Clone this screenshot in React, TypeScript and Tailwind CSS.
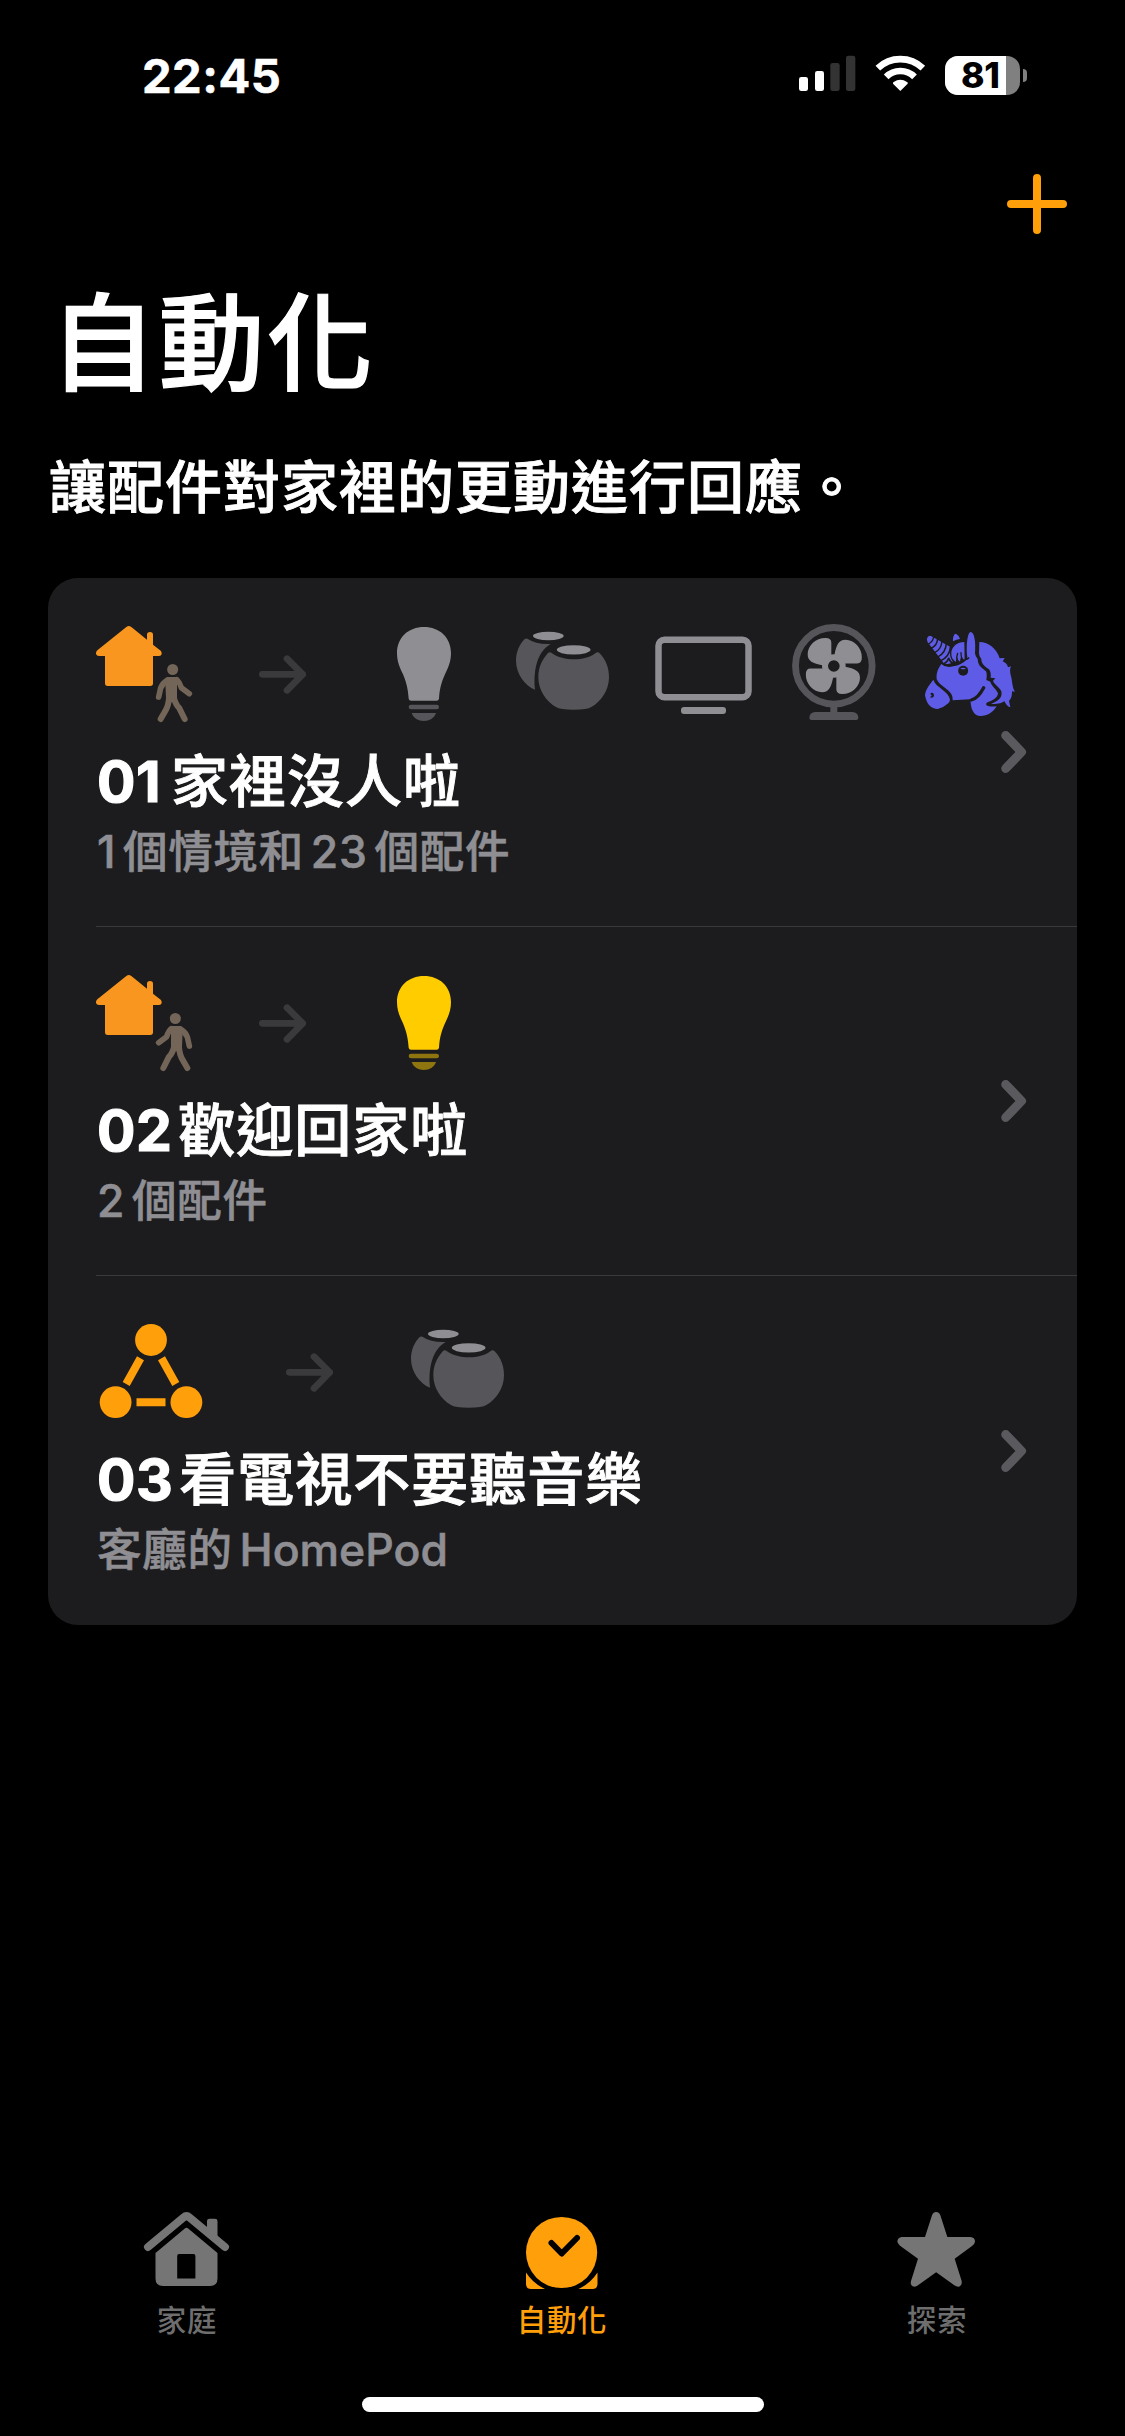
import React from "react";

const CARD = "#1c1c1e";

function StatusBar() {
  return (
    <div className="flex h-[151px] items-center justify-between pl-[142px] pr-[98px]">
      <div className="pt-[1px] text-[47px] font-bold leading-[60px] tracking-[0.5px] [-webkit-text-stroke:0.6px]">22:45</div>
      <div className="flex items-center">
        <svg className="h-[65px] w-[140px]" viewBox="15 0 420 195">
          <rect x="27" y="102" width="27" height="42" rx="7" fill="#fff" />
          <rect x="75" y="84" width="27" height="60" rx="7" fill="#fff" />
          <rect x="121" y="60" width="28" height="84" rx="7" fill="#333" />
          <rect x="168" y="38" width="28" height="106" rx="7" fill="#333" />
          <g fill="none" stroke="#fff" strokeWidth="20">
            <path d="M263.5 75.5A97.500 97.500 0 0 1 398.500 75.5" />
            <path d="M288.500 101.500A60.500 60.500 0 0 1 373.500 101.500" />
          </g>
          <path d="M331 144L309 122Q308 119 311 117Q331 103 351 117Q355 119 353 122Z" fill="#fff" />
        </svg>
        <div className="ml-[10px] flex items-center">
          <div className="flex h-[39px] w-[75px] rounded-[13px] bg-[#808080]">
            <div className="h-full w-[61px] rounded-l-[13px] bg-white pl-[16px] text-[35.500px] font-extrabold leading-[39px] tracking-[-0.3px] text-black">81</div>
          </div>
          <div className="ml-[3px] h-[13px] w-[4px] rounded-r-full bg-[#808080]" />
        </div>
      </div>
    </div>
  );
}

function HouseAndPerson({ leaving }: { leaving?: boolean }) {
  return (
    <svg className="h-[104px] w-[100px]" viewBox="48 33 300 312">
      <path
        fill="#f8961f"
        d="M146 45Q150 45 154 48L201 86V71Q201 63 210 63Q219 63 219 71V101L242 119Q247 125 244 131Q242 135 236 135H219V217Q219 225 211 225H83Q75 225 75 217V135H57Q50 135 48 129Q47 122 53 117L139 48Q143 45 146 45Z"
      />
      <g transform={leaving ? "translate(564 0) scale(-1 1)" : undefined}>
        <g fill="none" stroke="#736557" strokeLinecap="round" strokeLinejoin="round">
          <path strokeWidth="17" d="M274 206Q265 214 260 230L236 248M301 207Q316 216 322 231L328 258" />
          <path strokeWidth="18" d="M282 262Q276 282 267 290L250 324M297 262Q299 284 306 296L322 324" />
        </g>
        <path fill="#736557" d="M274 198H300Q310 200 308 214L306 262Q305 270 300 274H286L273 264V212Z" />
        <circle cx="286" cy="175.500" r="16.500" fill="#736557" />
      </g>
    </svg>
  );
}

function Nodes() {
  return (
    <svg className="h-[104px] w-[108px]" viewBox="96 1320 108 104">
      <g fill="#ff9f0a">
        <circle cx="151" cy="1340" r="15.900" />
        <circle cx="115.600" cy="1402.200" r="15.900" />
        <circle cx="186.400" cy="1402.200" r="15.900" />
      </g>
      <path d="M140.500 1358.200L126.200 1384M161.500 1358.200L175.800 1384M136.500 1402.300H165.500" stroke="#ff9f0a" strokeWidth="8" />
    </svg>
  );
}

function Arrow() {
  return (
    <svg className="h-[104px] w-[48px]" viewBox="537 33 144 312">
      <path d="M547 190H668M621 143L668 190L621 238" fill="none" stroke="#3a3a3c" strokeWidth="20" strokeLinecap="round" strokeLinejoin="round" />
    </svg>
  );
}

function Bulb({ on }: { on?: boolean }) {
  const base = on ? "#8e750f" : "#56565a";
  return (
    <svg className="h-[104px] w-[54px]" viewBox="951 33 162 312">
      <path
        fill={on ? "#ffcc00" : "#8e8e93"}
        d="M1032 48C1079 48 1113 80 1113 126C1113 152 1105 169 1095 190C1083 217 1079 235 1077 263Q1076 269 1070 269H993Q987 269 986 263C984 235 980 217 969 190C959 169 951 152 951 126C951 80 985 48 1032 48Z"
      />
      <rect x="986" y="281" width="91" height="14" rx="7" fill={base} />
      <path d="M995 306H1068C1063 322 1048 330 1031.500 330S1000 322 995 306Z" fill={base} />
    </svg>
  );
}

function Speakers() {
  return (
    <svg className="h-[104px] w-[94px]" viewBox="48 66 282 312">
      <path d="M74 117Q80 113 85 118Q108 134 152 132C120 150 98 195 105 269C75 257 48 222 48 182C48 155 59 132 74 117Z" fill="#56565a" />
      <path d="M144 159Q150 154 156 160C190 184 255 184 286 160Q293 154 299 160C318 180 327 203 327 232C327 270 304 305 274 321Q262 329 221 329Q180 329 168 321C138 305 115 270 115 232C115 203 125 180 144 159Z" fill="#56565a" />
      <ellipse cx="145" cy="108" rx="46" ry="12.500" fill="#8e8e93" />
      <ellipse cx="221" cy="149.500" rx="50.500" ry="14" fill="#8e8e93" />
    </svg>
  );
}

function Television() {
  return (
    <svg className="h-[104px] w-[97px]" viewBox="465 66 291 312">
      <rect x="475.500" y="119" width="270" height="172.500" rx="18" fill="none" stroke="#8e8e93" strokeWidth="19.500" />
      <rect x="543" y="321" width="135" height="21" rx="9" fill="#8e8e93" />
    </svg>
  );
}

const BLADE = "M183 163V128Q183 114 166 114C138 113 112 136 112 163C112 184 128 190 156 196L190 198Z";

function Fan() {
  return (
    <svg className="h-[104px] w-[84px]" viewBox="65 66 252 312">
      <circle cx="190.500" cy="197.500" r="115" fill="none" stroke="#56565a" strokeWidth="20.500" />
      <path d="M180 318H201V336H246Q264 338 264 354Q264 360 257 360H124Q117 360 117 354Q117 338 135 336H180Z" fill="#56565a" />
      <g fill="#8e8e93">
        <path d={BLADE} />
        <path d={BLADE} transform="rotate(90 190.500 198)" />
        <path d={BLADE} transform="rotate(180 190.500 198)" />
        <path d={BLADE} transform="rotate(270 190.500 198)" />
        <circle cx="190.500" cy="198" r="35.500" />
      </g>
      <circle cx="190.500" cy="198" r="17.500" fill={CARD} />
    </svg>
  );
}

function Unicorn() {
  return (
    <svg className="h-[104px] w-[92px]" viewBox="462 66 276 312">
      <g fill="#5e5ce6">
        {/* horn */}
        <path d="M471 120Q470 109 480 107L487 110L541 141Q536 170 549 186Q535 196 521 189L473 127Z" />
        {/* far ear */}
        <path d="M549 124C548 110 553 100 558 101Q567 106 570 117Q559 118 549 124Z" />
        {/* forelock */}
        <path d="M583 126C562 126 545 140 544 158C543 170 548 180 558 186Q558 178 561 172Q563 181 570 185Q571 176 573 170Q577 177 584 179Z" />
        {/* face */}
        <path d="M514 192Q528 206 550 199Q575 195 588 181Q592 178 592 170C588 140 592 97 602 96C613 97 618 125 615 160Q616 170 623 177C624 200 638 204 648 214Q652 222 649 240L661 245C664 258 680 268 684 280C683 294 667 302 650 308Q646 314 652 317Q664 321 680 319C668 338 652 348 632 348C612 347 604 330 602 308L600 298L548 301C552 270 510 262 500 237C498 220 504 206 514 192Z" />
        {/* muzzle */}
        <path d="M490 239C498 264 536 272 540 299Q540 306 533 311Q518 324 503 327C484 327 470 314 465 286C466 268 479 254 490 239Z" />
        {/* mane */}
        <path d="M628 126C657 126 681 148 689 175L704 174L698 184Q712 190 714 202L723 199Q718 209 722 225C727 240 726 262 735 275L726 274Q727 293 717 303L721 322Q708 318 704 304Q688 314 663 311C686 304 698 292 694 274C690 262 674 256 669 242L676 235L662 233Q664 215 656 207C642 198 634 190 634 177Q627 170 627 160Z" />
      </g>
      <g fill="none" stroke={CARD} strokeLinecap="round" strokeLinejoin="round">
        <path strokeWidth="4.500" d="M491 111Q489 124 477 131M503 116Q501 137 485 144M516 123Q514 148 495 157M529 131Q527 158 505 170M541 142Q539 168 513 182" />
        <path strokeWidth="5" d="M524 190Q532 186 536 175Q541 187 550 190" />
        <path strokeWidth="4" d="M563 160Q559 170 561 181M573 158Q572 169 577 177" />
        <path strokeWidth="10" d="M604 300C620 296 632 280 641 263" />
        <path strokeWidth="5" d="M586 178Q592 178 596 174" />
      </g>
      <circle cx="579.500" cy="212" r="15" fill={CARD} />
      <path d="M571 206Q579 200 588 206Q579 209 571 206Z" fill="#5e5ce6" />
      <path d="M481 282Q483 277 489 279Q494 284 491 290Q485 296 480 291Q486 289 485 286Z" fill={CARD} />
    </svg>
  );
}

function Chevron() {
  return (
    <svg className="h-[46px] w-[30px] shrink-0" viewBox="0 0 30 46">
      <path d="M6.700 6.500L22.500 23L6.700 39.500" fill="none" stroke="#5a5a5e" strokeWidth="9" strokeLinecap="round" strokeLinejoin="round" />
    </svg>
  );
}

interface RowProps {
  number: string;
  title: string;
  detail: React.ReactNode;
  last?: boolean;
  children: React.ReactNode;
}

function AutomationRow({ number, title, detail, last, children }: RowProps) {
  return (
    <div className="ml-12 flex h-[349px] items-center">
      <div className={`flex h-full w-full items-center ${last ? "" : "border-b border-[#39393c]"}`}>
        <div className="h-full w-[903px] pt-[44px]">
          <div className="flex h-[104px] w-[925px]">{children}</div>
          <div className="mt-[18px] flex h-[76px] items-center whitespace-nowrap pl-[1px] text-[57px] font-bold leading-[76px]">
            <span className="tracking-[0.5px] [-webkit-text-stroke:1.2px]">{number}</span>
            <span className={`font-medium tracking-[1px] [-webkit-text-stroke:0.9px] ${number === "01" ? "ml-[10px]" : "ml-[6px]"}`}>{title}</span>
          </div>
          <div className="h-[64px] whitespace-nowrap pl-[1px] text-[44.500px] font-medium leading-[64px] tracking-[0.800px] text-[#8e8e93] [-webkit-text-stroke:0.6px] [word-spacing:-6px]">{detail}</div>
        </div>
        <div className="w-[30px]">
          <Chevron />
        </div>
      </div>
    </div>
  );
}

function HomeIcon() {
  return (
    <svg className="h-[80px] w-[90px]" viewBox="142 2210 90 80">
      <path d="M148 2247L183.500 2217.500Q186.500 2215 189.500 2217.500L225 2247" fill="none" stroke="#757575" strokeWidth="8" strokeLinecap="round" />
      <path d="M207 2236V2221Q207 2218.700 209.500 2218.700H215Q217.500 2218.700 217.500 2221V2242Z" fill="#757575" />
      <path fillRule="evenodd" d="M184.800 2228.500Q186.500 2227 188.200 2228.500L217.500 2253V2278.500Q217.500 2286 210 2286H163Q155.500 2286 155.500 2278.500V2253ZM179 2254Q177.200 2254 177.200 2256V2278.500H195.400V2256Q195.400 2254 193.500 2254Z" fill="#757575" />
    </svg>
  );
}

function ClockIcon() {
  return (
    <svg className="h-[80px] w-[90px]" viewBox="517 2210 90 80">
      <circle cx="561.600" cy="2252.500" r="35.600" fill="#ff9f0a" />
      <path d="M551.500 2243L561.700 2253.500L577 2238" fill="none" stroke="#000" strokeWidth="6" strokeLinecap="round" strokeLinejoin="round" />
      <path d="M526 2272.500Q533 2283.500 545 2289H531Q526 2289 526 2284ZM597.500 2272.500Q590.500 2283.500 578.500 2289H592.500Q597.500 2289 597.500 2284Z" fill="#ff9f0a" />
    </svg>
  );
}

function StarIcon() {
  return (
    <svg className="h-[80px] w-[90px]" viewBox="126 90 270 240">
      <path fill="#757575" d="M246 106Q250 96 258.500 96Q267 96 271 106L292 171H361Q375 172 375 185Q374 192 366 198L314 236L335 303Q337 316 327 320Q320 321 313 316L258.500 277L204 316Q196 322 188 319Q180 314 183 303L204 236L150 197Q142 191 142 184Q144 172 155 171H225Z" />
    </svg>
  );
}

function Tab({ label, active, children }: { label: string; active?: boolean; children: React.ReactNode }) {
  return (
    <div className={`flex w-[375px] flex-col items-center ${active ? "text-[#ff9f0a]" : "text-[#6e6e6e]"}`}>
      <div className="mr-[2px]">{children}</div>
      <div className="mr-[1px] mt-[8px] text-[29.500px] font-medium leading-[44px] tracking-[0.700px]">{label}</div>
    </div>
  );
}

export default function App() {
  return (
    <div className="flex h-[2436px] w-[1125px] flex-col bg-black font-['Inter','Noto_Sans_CJK_TC',sans-serif] text-white">
      <StatusBar />
      <div className="flex h-[133px] justify-end pr-[58px] pt-[23px]">
        <svg className="h-[60px] w-[60px]" viewBox="0 0 60 60">
          <path d="M30 4V56M4 30H56" stroke="#ff9f0a" strokeWidth="8" strokeLinecap="round" />
        </svg>
      </div>
      <h1 className="pl-[50px] text-[106px] font-medium leading-[120px] tracking-[2.500px] [-webkit-text-stroke:1.2px]">自動化</h1>
      <p className="mt-[44px] pl-[49px] text-[57px] font-medium leading-[80px] tracking-[1px] [-webkit-text-stroke:0.9px]">讓配件對家裡的更動進行回應。</p>
      <div className="mx-12 mt-[50px] flex h-[1047px] flex-col overflow-hidden rounded-[30px] bg-[#1c1c1e]">
        <AutomationRow number="01" title="家裡沒人啦" detail="1 個情境和 23 個配件">
          <HouseAndPerson leaving />
          <div className="ml-[63px]"><Arrow /></div>
          <div className="ml-[90px]"><Bulb /></div>
          <div className="ml-[65px]"><Speakers /></div>
          <div className="ml-[45px]"><Television /></div>
          <div className="ml-[40px]"><Fan /></div>
          <div className="ml-[48px]"><Unicorn /></div>
        </AutomationRow>
        <AutomationRow number="02" title="歡迎回家啦" detail="2 個配件">
          <HouseAndPerson />
          <div className="ml-[63px]"><Arrow /></div>
          <div className="ml-[90px]"><Bulb on /></div>
        </AutomationRow>
        <AutomationRow number="03" title="看電視不要聽音樂" detail={<>客廳的 <span className="tracking-[0px]">HomePod</span></>} last>
          <Nodes />
          <div className="ml-[82px]"><Arrow /></div>
          <div className="ml-[77px]"><Speakers /></div>
        </AutomationRow>
      </div>
      <div className="mt-auto flex">
        <Tab label="家庭"><HomeIcon /></Tab>
        <Tab label="自動化" active><ClockIcon /></Tab>
        <Tab label="探索"><StarIcon /></Tab>
      </div>
      <div className="mx-auto mb-[24px] mt-[55px] h-[15px] w-[402px] rounded-full bg-white" />
    </div>
  );
}
